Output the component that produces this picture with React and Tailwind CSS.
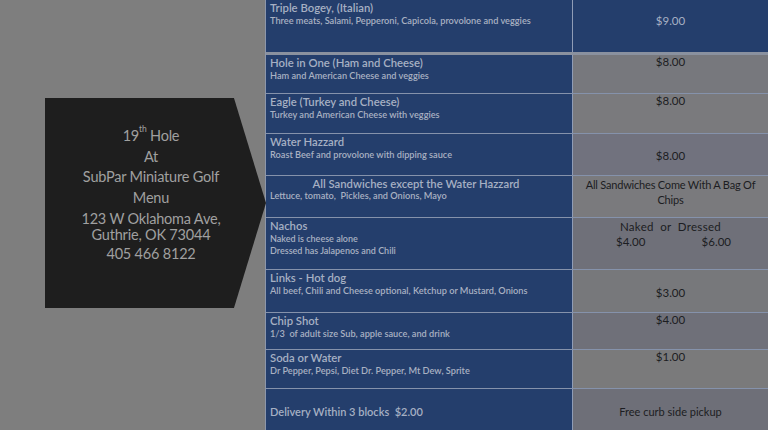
const rows = [
  {
    h: 'h-[55px]',
    title: 'Triple Bogey, (Italian)',
    desc: ['Three meats, Salami, Pepperoni, Capicola, provolone and veggies'],
    price: '$9.00',
    rightBg: 'bg-[#243e6c]',
    rightPos: 'items-start pt-[14px]',
    rightText: 'text-[#a7b1c4]',
    border: 'border-b-[3px] border-[#8a919f]',
  },
  { h: 'h-[39px]', title: 'Hole in One (Ham and Cheese)', desc: ['Ham and American Cheese and veggies'], price: '$8.00', rightBg: 'bg-[#77787d]', rightPos: 'items-start pt-0' },
  { h: 'h-[40px]', title: 'Eagle (Turkey and Cheese)', desc: ['Turkey and American Cheese with veggies'], price: '$8.00', rightBg: 'bg-[#7a7a7d]', rightPos: 'items-start pt-0' },
  { h: 'h-[42px]', title: 'Water Hazzard', desc: ['Roast Beef and provolone with dipping sauce'], price: '$8.00', rightBg: 'bg-[#71727e]', rightPos: 'items-start pt-[15px]' },
];

const rows2 = [
  { h: 'h-[43px]', title: 'Links - Hot dog', desc: ['All beef, Chili and Cheese optional, Ketchup or Mustard, Onions'], price: '$3.00', rightBg: 'bg-[#77787b]', rightPos: 'items-start pt-[16px]' },
  { h: 'h-[37px]', title: 'Chip Shot', desc: ['1/3  of adult size Sub, apple sauce, and drink'], price: '$4.00', rightBg: 'bg-[#6f7079]', rightPos: 'items-start pt-0' },
  { h: 'h-[39px]', title: 'Soda or Water', desc: ['Dr Pepper, Pepsi, Diet Dr. Pepper, Mt Dew, Sprite'], price: '$1.00', rightBg: 'bg-[#7a7a7b]', rightPos: 'items-start pt-0' },
];

function MenuRow({ row }) {
  return (
    <div className={`flex ${row.h} shrink-0 ${row.border || 'border-b border-[#8592ab]'}`}>
      <div className="w-[307px] bg-[#243e6c] border-r border-[#8f9cb6] pl-[4px] pt-px">
        <div className="text-[11.3px] leading-[13px] font-semibold text-[#a6b0c3]">{row.title}</div>
        {row.desc.map((d) => (
          <div key={d} className="text-[9.2px] leading-[12px] font-semibold text-[#a9b1c2] mt-px whitespace-pre">{d}</div>
        ))}
      </div>
      <div className={`flex-1 flex justify-center ${row.rightBg} ${row.rightPos}`}>
        <span className={`text-[11.5px] leading-[13px] ${row.rightText || 'text-[#1c1d22]'}`}>{row.price}</span>
      </div>
    </div>
  );
}

export default function App() {
  return (
    <div className="w-[768px] h-[430px] bg-[#7e7e7e] flex overflow-hidden font-['Lato',sans-serif]">
      <div className="w-[265px] shrink-0 pt-[98px] pl-[45px]">
        <div className="w-[221px] h-[210px] bg-[#1e1e1e] [clip-path:polygon(0_0,85.5%_0,100%_50%,85.5%_100%,0_100%)] flex flex-col items-center pt-[28px] pr-[9px] text-[#a0a0a0] text-[14.5px] tracking-[-0.2px]">
          <div className="leading-[20px]">19<sup className="text-[8.5px] align-[5px]">th</sup> Hole</div>
          <div className="leading-[21px]">At</div>
          <div className="leading-[20px]">SubPar Miniature Golf</div>
          <div className="leading-[21px]">Menu</div>
          <div className="leading-[16px] mt-[3px] text-center">123 W Oklahoma Ave,<br />Guthrie, OK 73044</div>
          <div className="leading-[20px] mt-[1px]">405 466 8122</div>
        </div>
      </div>

      <div className="flex-1 flex flex-col border-l border-[#8d97ab]">
        {rows.map((r) => (
          <MenuRow key={r.title} row={r} />
        ))}

        <div className="flex h-[42px] shrink-0 border-b border-[#8592ab]">
          <div className="w-[307px] bg-[#243e6c] border-r border-[#8f9cb6] pl-[4px] pt-px">
            <div className="text-[11.3px] leading-[13px] font-semibold text-[#a6b0c3] text-center pr-[10px]">All Sandwiches except the Water Hazzard</div>
            <div className="text-[9.2px] leading-[12px] font-semibold text-[#a9b1c2] whitespace-pre">Lettuce, tomato,  Pickles, and Onions, Mayo</div>
          </div>
          <div className="flex-1 bg-[#7a7a7d] text-center text-[11px] leading-[15px] text-[#1c1d22] tracking-[-0.2px] pt-[1px]">
            All Sandwiches Come With A Bag Of<br />Chips
          </div>
        </div>

        <div className="flex h-[52px] shrink-0 border-b border-[#8592ab]">
          <div className="w-[307px] bg-[#243e6c] border-r border-[#8f9cb6] pl-[4px] pt-px">
            <div className="text-[11.3px] leading-[13px] font-semibold text-[#a6b0c3]">Nachos</div>
            <div className="text-[9px] leading-[12px] font-semibold text-[#a9b1c2] mt-px">Naked is cheese alone</div>
            <div className="text-[9px] leading-[12px] font-semibold text-[#a9b1c2]">Dressed has Jalapenos and Chili</div>
          </div>
          <div className="flex-1 bg-[#6f7079] text-[11.5px] leading-[15px] text-[#1c1d22] pt-[1px]">
            <div className="text-center tracking-[0.3px] whitespace-pre">Naked  or  Dressed</div>
            <div className="flex justify-between pl-[43px] pr-[37px]">
              <span>$4.00</span>
              <span>$6.00</span>
            </div>
          </div>
        </div>

        {rows2.map((r) => (
          <MenuRow key={r.title} row={r} />
        ))}

        <div className="flex flex-1">
          <div className="w-[307px] bg-[#243e6c] border-r border-[#8f9cb6] pl-[4px] flex items-center pt-[5px]">
            <span className="text-[11px] font-semibold text-[#a6b0c3] whitespace-pre">Delivery Within 3 blocks  $2.00</span>
          </div>
          <div className="flex-1 bg-[#6e6f78] flex items-center justify-center pt-[5px]">
            <span className="text-[11px] text-[#1c1d22]">Free curb side pickup</span>
          </div>
        </div>
      </div>
    </div>
  );
}
